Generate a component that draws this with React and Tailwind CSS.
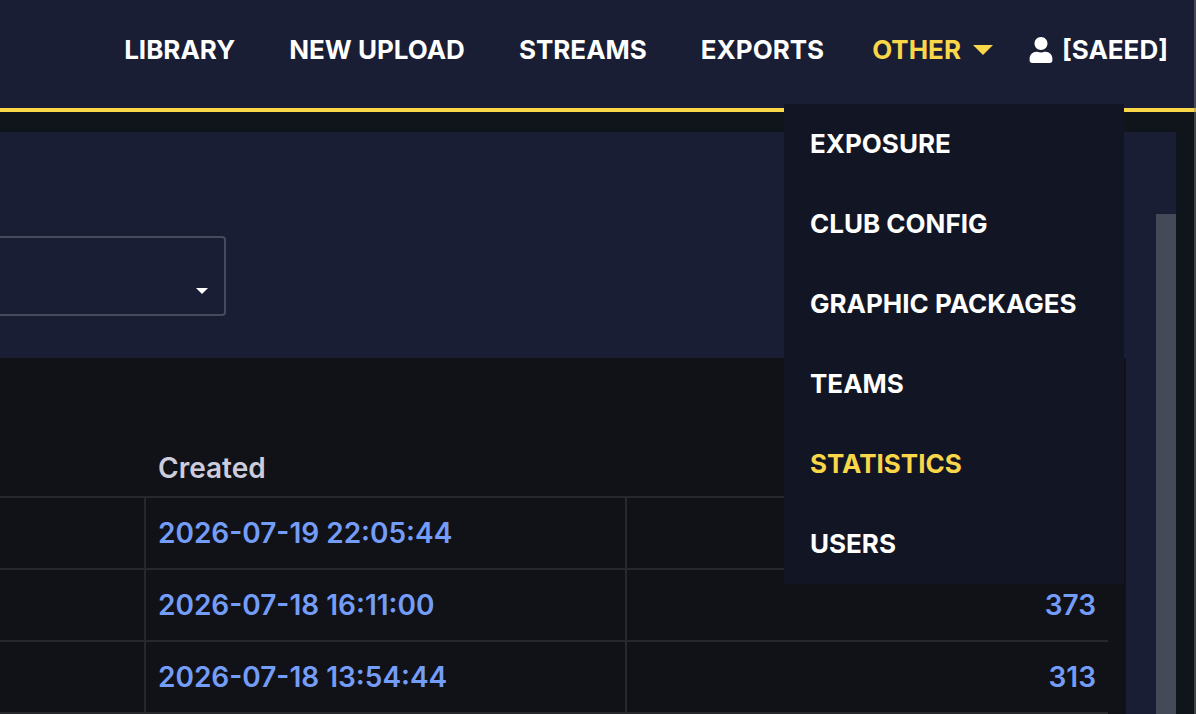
import { FaUser } from 'react-icons/fa'

const navLinks = ['LIBRARY', 'NEW UPLOAD', 'STREAMS', 'EXPORTS']

const menuItems = ['EXPOSURE', 'CLUB CONFIG', 'GRAPHIC PACKAGES', 'TEAMS', 'STATISTICS', 'USERS']

const rows = [
  { created: '2026-07-19 22:05:44', count: '' },
  { created: '2026-07-18 16:11:00', count: '373' },
  { created: '2026-07-18 13:54:44', count: '313' },
]

function Caret({ className }) {
  return (
    <svg viewBox="0 0 20 10" className={className} fill="currentColor" aria-hidden="true">
      <path d="M0 0h20L10 10z" />
    </svg>
  )
}

function Navbar() {
  const active = 'STATISTICS'

  return (
    <header className="relative z-10 h-28 bg-[#191e34] border-b-4 border-[#fad749] text-[26px] leading-8 font-bold text-white">
      <nav className="flex items-center justify-end pt-[34px] pr-7 whitespace-nowrap">
        <div className="flex gap-[54px] pr-12">
          {navLinks.map((label) => (
            <a key={label} href="#" className="hover:text-[#fad749]">{label}</a>
          ))}
        </div>
        <button type="button" aria-expanded="true" className="flex items-center gap-3 pr-9 text-[#fad749]">
          OTHER
          <Caret className="w-5 h-[10px]" />
        </button>
        <a href="#" className="flex items-center gap-[9px]">
          <FaUser className="w-6 h-[26px]" />
          [SAEED]
        </a>
      </nav>
      <ul className="absolute right-[72px] top-[104px] w-[340px] bg-[#121624]">
        {menuItems.map((label) => (
          <li key={label}>
            <a href="#" className={label === active ? 'flex items-center h-20 pl-[26px] text-[#fad749]' : 'flex items-center h-20 pl-[26px] hover:text-[#fad749]'}>
              {label}
            </a>
          </li>
        ))}
      </ul>
    </header>
  )
}

function Filter() {
  return (
    <div className="pt-[104px] pb-[42px]">
      <div className="relative w-[226px] text-white">
        <select aria-label="Filter" className="block w-full h-20 appearance-none bg-transparent border-2 border-l-0 border-[#464a5b] rounded-r-[4px]" />
        <Caret className="absolute right-[18px] bottom-[22px] w-3 h-[6px] pointer-events-none" />
      </div>
    </div>
  )
}

function StatsTable() {
  return (
    <div className="grow bg-[#111217] pt-[82px] pr-[18px]">
      <table className="w-full table-fixed border-separate border-spacing-0 text-[28px] leading-8 font-semibold">
        <thead>
          <tr className="h-14 text-left text-[#ccccdc]">
            <th className="w-[146px]" />
            <th className="w-[481px] pl-3 font-semibold">Created</th>
            <th />
          </tr>
        </thead>
        <tbody className="text-[#749df9]">
          {rows.map((row) => (
            <tr key={row.created} className="h-[72px]">
              <td className="border-t-2 border-r-2 border-[#27282c]" />
              <td className="border-t-2 border-r-2 border-[#27282c] pl-3">
                <a href="#">{row.created}</a>
              </td>
              <td className="border-t-2 border-[#27282c] pr-3 text-right">
                {row.count && <a href="#">{row.count}</a>}
              </td>
            </tr>
          ))}
        </tbody>
        <tfoot>
          <tr>
            <td colSpan={3} className="border-t-2 border-[#27282c]" />
          </tr>
        </tfoot>
      </table>
    </div>
  )
}

export default function App() {
  return (
    <div className="flex flex-col h-screen overflow-hidden bg-[#10151b] font-['Inter',sans-serif]">
      <Navbar />
      <main className="flex grow min-h-0 mt-5 mr-5 bg-[#191e34]">
        <div className="flex flex-col grow min-w-0">
          <Filter />
          <StatsTable />
        </div>
        {/* scroll rail */}
        <div className="flex shrink-0 pl-[30px] pt-[82px]">
          <div className="w-5 bg-[#454a59]" />
        </div>
      </main>
      <div className="fixed inset-y-0 right-0 z-20 w-[2px] bg-[#80807c]/45" />
    </div>
  )
}
